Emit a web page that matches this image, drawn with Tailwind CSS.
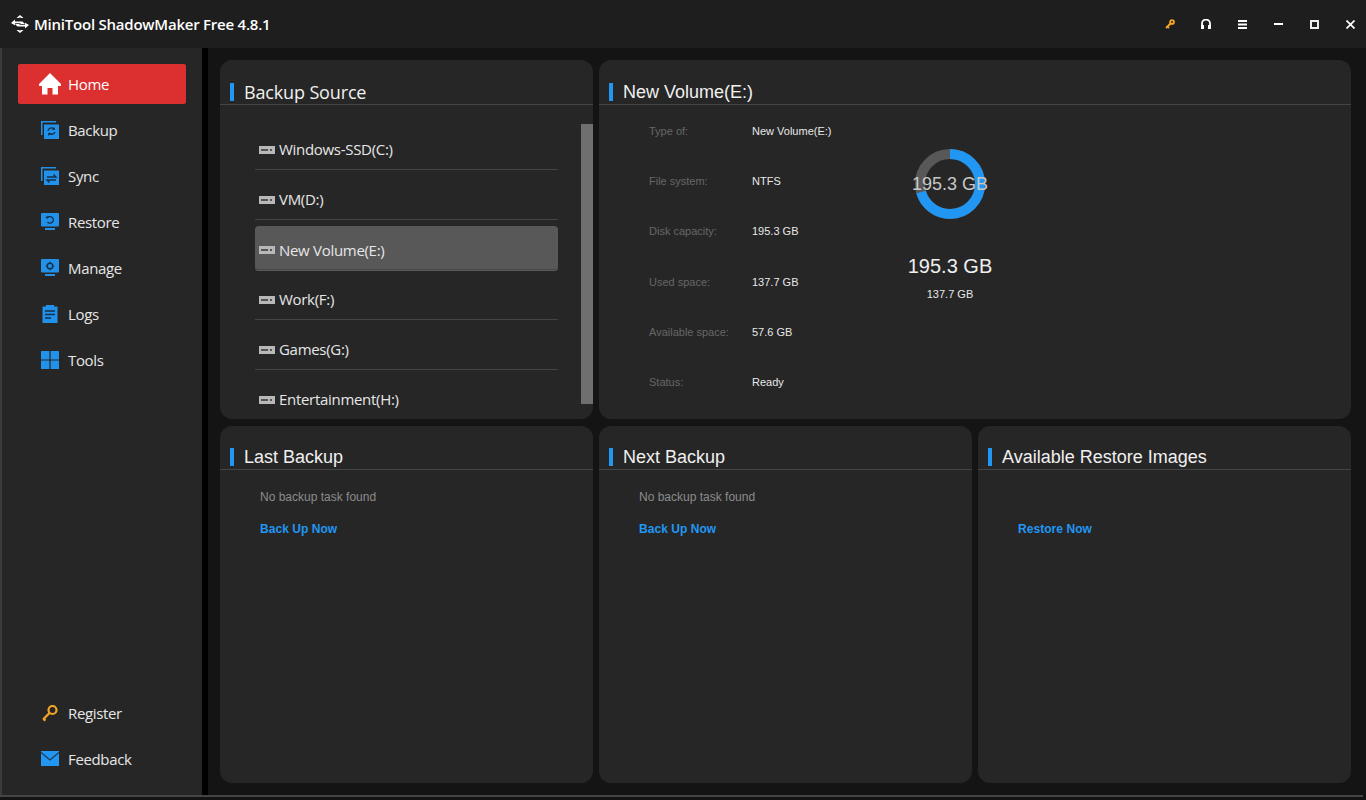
<!DOCTYPE html>
<html lang="en">
<head>
  <meta charset="UTF-8" />
  <title>MiniTool ShadowMaker Free 4.8.1</title>
  <script src="https://cdn.jsdelivr.net/npm/@tailwindcss/browser@4"></script>
</head>
<body class="w-[1366px] h-[800px] overflow-hidden bg-[#141414] font-['Liberation_Sans',sans-serif]">

  <!-- Title bar -->
  <header class="h-[48px] bg-[#1e1e1e] flex items-center pl-[11px] pr-[10px]">
    <svg class="w-[18px] h-[18px] mr-[5px]" viewBox="0 0 18 18" fill="#fff">
      <path d="M9 0l3.500 3H10L9 2.200 8 3H5.500zM9 18l3.500-3H10l-1 .8L8 15H5.500z"/>
      <path d="M0 8l4-3.500v2h7.500L14 9h-4L9 8.200H4v2z"/>
      <path d="M18 10l-4 3.500v-2H6.500L4 9h4l1 .8h5v-2z"/>
    </svg>
    <span class="text-[15px] font-semibold text-white font-['Open_Sans',sans-serif] tracking-[-0.23px]">MiniTool ShadowMaker Free 4.8.1</span>
    <div class="ml-auto flex items-center gap-[24px]">
      <span class="w-[12px] flex justify-center"><svg class="w-[10px] h-[10px]" viewBox="0 0 10 10" fill="none" stroke="#f5a623" stroke-width="1.900"><circle cx="7" cy="3" r="1.900"/><path d="M5.500 4.500L1 9M2.500 7.500L4 9"/></svg></span>
      <span class="w-[12px] flex justify-center"><svg class="w-[10px] h-[10px]" viewBox="0 0 10 10" fill="none" stroke="#fff" stroke-width="1.800"><path d="M1 7V4.500a4 4 0 018 0V7"/><rect x="0" y="6" width="3" height="4" fill="#fff" stroke="none"/><rect x="7" y="6" width="3" height="4" fill="#fff" stroke="none"/></svg></span>
      <span class="w-[12px] flex justify-center"><svg class="w-[9px] h-[9px]" viewBox="0 0 9 9" fill="#fff"><rect width="9" height="2"/><rect y="3.500" width="9" height="2"/><rect y="7" width="9" height="2"/></svg></span>
      <span class="w-[12px] flex justify-center"><span class="w-[9px] h-[2px] bg-white"></span></span>
      <span class="w-[12px] flex justify-center"><span class="w-[9px] h-[9px] border-2 border-[#eee]"></span></span>
      <span class="w-[12px] flex justify-center"><svg class="w-[9px] h-[9px]" viewBox="0 0 9 9" stroke="#fff" stroke-width="1.700"><path d="M.5.500l8 8M8.500.500l-8 8"/></svg></span>
    </div>
  </header>

  <div class="flex h-[747px]">
    <!-- Sidebar -->
    <aside class="w-[208px] bg-[#262626] border-l-2 border-r-[6px] border-l-[#3c3c3c] border-r-black pl-[16px] pt-[16px] flex flex-col text-[15px] text-[#e6e6e6] tracking-[-0.35px] font-['Open_Sans',sans-serif]">
      <a class="w-[168px] h-[40px] bg-[#dc2f2f] rounded-[2px] flex items-center pl-[21px] gap-[7px] text-white">
        <svg class="w-[22px] h-[22px]" viewBox="0 0 22 22" fill="#fff"><path d="M11 0L0 11v2h3v8.500h5.500V15h5v6.500H19V13h3v-2z"/></svg>
        Home
      </a>
      <nav class="mt-[3px] flex flex-col">
        <a class="h-[46px] flex items-center pl-[23px] gap-[9px]">
          <svg class="w-[18px] h-[18px]" viewBox="0 0 18 18"><path d="M0 0h15v1.500H1.500V14H0z" fill="#2191ea"/><rect x="3" y="3.500" width="15" height="14.500" fill="#2191ea"/><path d="M7 10a3.500 3.500 0 016-2M14 11a3.500 3.500 0 01-6 1" fill="none" stroke="#14304a" stroke-width="1.400"/><path d="M13.800 6v3h-3zM7.200 15v-3h3z" fill="#14304a"/></svg>
          Backup
        </a>
        <a class="h-[46px] flex items-center pl-[23px] gap-[9px]">
          <svg class="w-[18px] h-[18px]" viewBox="0 0 18 18"><path d="M0 0h15v1.500H1.500V14H0z" fill="#2191ea"/><rect x="3" y="3.500" width="15" height="14.500" fill="#2191ea"/><path d="M6 10h9l-2.500-2.500M15 13H6l2.500 2.500" fill="none" stroke="#14304a" stroke-width="1.400"/></svg>
          Sync
        </a>
        <a class="h-[46px] flex items-center pl-[23px] gap-[9px]">
          <svg class="w-[18px] h-[18px]" viewBox="0 0 18 18"><rect width="18" height="13.500" rx="1" fill="#2191ea"/><rect x="4" y="15" width="10" height="2" fill="#2191ea"/><path d="M6 5.500a3.300 3.300 0 11.500 3.500" fill="none" stroke="#14304a" stroke-width="1.300"/><path d="M4.500 5h3.500L6 2.800z" fill="#14304a"/></svg>
          Restore
        </a>
        <a class="h-[46px] flex items-center pl-[23px] gap-[9px]">
          <svg class="w-[18px] h-[18px]" viewBox="0 0 18 18"><rect width="18" height="13.500" rx="1" fill="#2191ea"/><rect x="4" y="15" width="10" height="2" fill="#2191ea"/><circle cx="9" cy="7" r="2.800" fill="none" stroke="#14304a" stroke-width="1.500"/><path d="M9 2.800v1.200M9 10v1.200M4.800 7H6M12 7h1.200" stroke="#14304a" stroke-width="1.200"/></svg>
          Manage
        </a>
        <a class="h-[46px] flex items-center pl-[23px] gap-[9px]">
          <svg class="w-[18px] h-[18px]" viewBox="0 0 18 18"><path d="M1.500 1.500h3.500V0h8v1.500h3.500V18h-15z" fill="#2191ea"/><path d="M4 6h10M4 9.500h10M4 13h6" stroke="#14304a" stroke-width="1.300"/></svg>
          Logs
        </a>
        <a class="h-[46px] flex items-center pl-[23px] gap-[9px]">
          <svg class="w-[18px] h-[18px]" viewBox="0 0 18 18" fill="#2191ea"><rect width="8.400" height="8.400" rx="0.500"/><rect x="9.600" width="8.400" height="8.400" rx="0.500"/><rect y="9.600" width="8.400" height="8.400" rx="0.500"/><rect x="9.600" y="9.600" width="8.400" height="8.400" rx="0.500"/></svg>
          Tools
        </a>
      </nav>
      <div class="mt-auto mb-[13px] flex flex-col">
        <a class="h-[46px] flex items-center pl-[23px] gap-[9px]">
          <svg class="w-[18px] h-[18px]" viewBox="0 0 18 18" fill="none" stroke="#f5a623" stroke-width="2.200"><circle cx="11.500" cy="6" r="4"/><path d="M8.500 9L2 15.500M2.500 15l2 1.500"/></svg>
          Register
        </a>
        <a class="h-[46px] flex items-center pl-[23px] gap-[9px]">
          <svg class="w-[18px] h-[16px]" viewBox="0 0 18 16"><path d="M0 0h18v15H0z" fill="#2196f3"/><path d="M0 1.500L9 9l9-7.500" fill="none" stroke="#22384d" stroke-width="1.300"/></svg>
          Feedback
        </a>
      </div>
    </aside>

    <!-- Main -->
    <main class="pl-[12px] pt-[12px] grid grid-cols-[373px_373px_373px] grid-rows-[359px_357px] gap-x-[6px] gap-y-[7px]">

      <section class="bg-[#262626] rounded-[12px] overflow-hidden relative">
        <h2 class="h-[45px] border-b border-[#444] pt-[23px] pl-[10px] flex items-start text-[18px] leading-[18px] text-[#f0f0f0] tracking-[-0.15px] font-['Open_Sans',sans-serif]">
          <span class="w-[4px] h-[18px] bg-[#2196f3] mr-[10px]"></span>Backup Source
        </h2>
        <ul class="absolute left-[35px] top-[60px] w-[303px] text-[15px] text-[#e6e6e6] tracking-[-0.3px] font-['Open_Sans',sans-serif]">
          <li class="h-[50px] border-b border-[#444] flex items-center pt-[10px] pl-[4px] gap-[4px]">
            <svg class="w-[16px] h-[8px]" viewBox="0 0 16 8" fill="#b8b8b8"><path d="M0 0h16v8H0z"/><path d="M2 3.300h7v1.400H2zM11 3.300h2v1.400h-2z" fill="#333"/></svg>
            Windows-SSD(C:)
          </li>
          <li class="h-[50px] border-b border-[#444] flex items-center pt-[10px] pl-[4px] gap-[4px]">
            <svg class="w-[16px] h-[8px]" viewBox="0 0 16 8" fill="#b8b8b8"><path d="M0 0h16v8H0z"/><path d="M2 3.300h7v1.400H2zM11 3.300h2v1.400h-2z" fill="#333"/></svg>
            VM(D:)
          </li>
          <li class="h-[45px] mt-[6px] bg-[#585858] shadow-[inset_0_-1px_0_#5a5a5a,inset_0_-2px_0_#484848] rounded-[4px] flex items-center pt-[3px] pl-[4px] gap-[4px]">
            <svg class="w-[16px] h-[8px]" viewBox="0 0 16 8" fill="#b8b8b8"><path d="M0 0h16v8H0z"/><path d="M2 3.300h7v1.400H2zM11 3.300h2v1.400h-2z" fill="#333"/></svg>
            New Volume(E:)
          </li>
          <li class="h-[49px] border-b border-[#444] flex items-center pt-[9px] pl-[4px] gap-[4px]">
            <svg class="w-[16px] h-[8px]" viewBox="0 0 16 8" fill="#b8b8b8"><path d="M0 0h16v8H0z"/><path d="M2 3.300h7v1.400H2zM11 3.300h2v1.400h-2z" fill="#333"/></svg>
            Work(F:)
          </li>
          <li class="h-[50px] border-b border-[#444] flex items-center pt-[10px] pl-[4px] gap-[4px]">
            <svg class="w-[16px] h-[8px]" viewBox="0 0 16 8" fill="#b8b8b8"><path d="M0 0h16v8H0z"/><path d="M2 3.300h7v1.400H2zM11 3.300h2v1.400h-2z" fill="#333"/></svg>
            Games(G:)
          </li>
          <li class="h-[50px] border-b border-transparent flex items-center pt-[10px] pl-[4px] gap-[4px]">
            <svg class="w-[16px] h-[8px]" viewBox="0 0 16 8" fill="#b8b8b8"><path d="M0 0h16v8H0z"/><path d="M2 3.300h7v1.400H2zM11 3.300h2v1.400h-2z" fill="#333"/></svg>
            Entertainment(H:)
          </li>
        </ul>
        <div class="absolute left-[361px] top-[64px] w-[12px] h-[280px] bg-[#6f6f6f]"></div>
      </section>

      <section class="col-span-2 bg-[#262626] rounded-[12px] overflow-hidden relative">
        <h2 class="h-[45px] border-b border-[#444] pt-[23px] pl-[10px] flex items-start text-[18px] leading-[18px] text-[#f0f0f0]">
          <span class="w-[4px] h-[18px] bg-[#2196f3] mr-[10px]"></span>New Volume(E:)
        </h2>
        <dl class="ml-[50px] mt-[16px] grid grid-cols-[103px_auto] auto-rows-[50.2px] w-[260px] text-[11px] leading-[20px]">
          <dt class="text-[#666]">Type of:</dt><dd class="text-[#e8e8e8]">New Volume(E:)</dd>
          <dt class="text-[#666]">File system:</dt><dd class="text-[#e8e8e8]">NTFS</dd>
          <dt class="text-[#666]">Disk capacity:</dt><dd class="text-[#e8e8e8]">195.3 GB</dd>
          <dt class="text-[#666]">Used space:</dt><dd class="text-[#e8e8e8]">137.7 GB</dd>
          <dt class="text-[#666]">Available space:</dt><dd class="text-[#e8e8e8]">57.6 GB</dd>
          <dt class="text-[#666]">Status:</dt><dd class="text-[#e8e8e8]">Ready</dd>
        </dl>
        <!-- Disk usage donut -->
        <div class="absolute left-[271px] top-[89px] w-[160px] flex flex-col items-center">
          <div class="relative w-[70px] h-[70px] flex items-center justify-center">
            <svg class="absolute inset-0 -rotate-90" viewBox="0 0 70 70" fill="none" stroke-width="10">
              <circle cx="35" cy="35" r="30" stroke="#585858"/>
              <circle cx="35" cy="35" r="30" stroke="#2196f3" stroke-dasharray="133 188.500"/>
            </svg>
            <span class="relative text-[18px] text-[#c8c8c8] whitespace-nowrap">195.3 GB</span>
          </div>
          <p class="mt-[35px] text-[20px] leading-[24px] text-[#f0f0f0]">195.3 GB</p>
          <p class="mt-[9px] text-[11px] leading-[14px] text-[#e8e8e8]">137.7 GB</p>
        </div>
      </section>

      <section class="bg-[#262626] rounded-[12px]">
        <h2 class="h-[44px] border-b border-[#444] pt-[22px] pl-[10px] flex items-start text-[18px] leading-[18px] text-[#f0f0f0]">
          <span class="w-[4px] h-[18px] bg-[#2196f3] mr-[10px]"></span>Last Backup
        </h2>
        <p class="ml-[40px] mt-[20px] text-[12px] leading-[14px] text-[#8c8c8c]">No backup task found</p>
        <a class="block ml-[40px] mt-[18px] text-[12px] leading-[14px] font-bold text-[#2196f3] tracking-[0.05px]">Back Up Now</a>
      </section>

      <section class="bg-[#262626] rounded-[12px]">
        <h2 class="h-[44px] border-b border-[#444] pt-[22px] pl-[10px] flex items-start text-[18px] leading-[18px] text-[#f0f0f0]">
          <span class="w-[4px] h-[18px] bg-[#2196f3] mr-[10px]"></span>Next Backup
        </h2>
        <p class="ml-[40px] mt-[20px] text-[12px] leading-[14px] text-[#8c8c8c]">No backup task found</p>
        <a class="block ml-[40px] mt-[18px] text-[12px] leading-[14px] font-bold text-[#2196f3] tracking-[0.05px]">Back Up Now</a>
      </section>

      <section class="bg-[#262626] rounded-[12px]">
        <h2 class="h-[44px] border-b border-[#444] pt-[22px] pl-[10px] flex items-start text-[18px] leading-[18px] text-[#f0f0f0]">
          <span class="w-[4px] h-[18px] bg-[#2196f3] mr-[10px]"></span>Available Restore Images
        </h2>
        <a class="block ml-[40px] mt-[52px] text-[12px] leading-[14px] font-bold text-[#2196f3] tracking-[0.05px]">Restore Now</a>
      </section>
    </main>
  </div>

  <div class="h-[2px] w-[1363px] bg-[#444]"></div>
</body>
</html>
